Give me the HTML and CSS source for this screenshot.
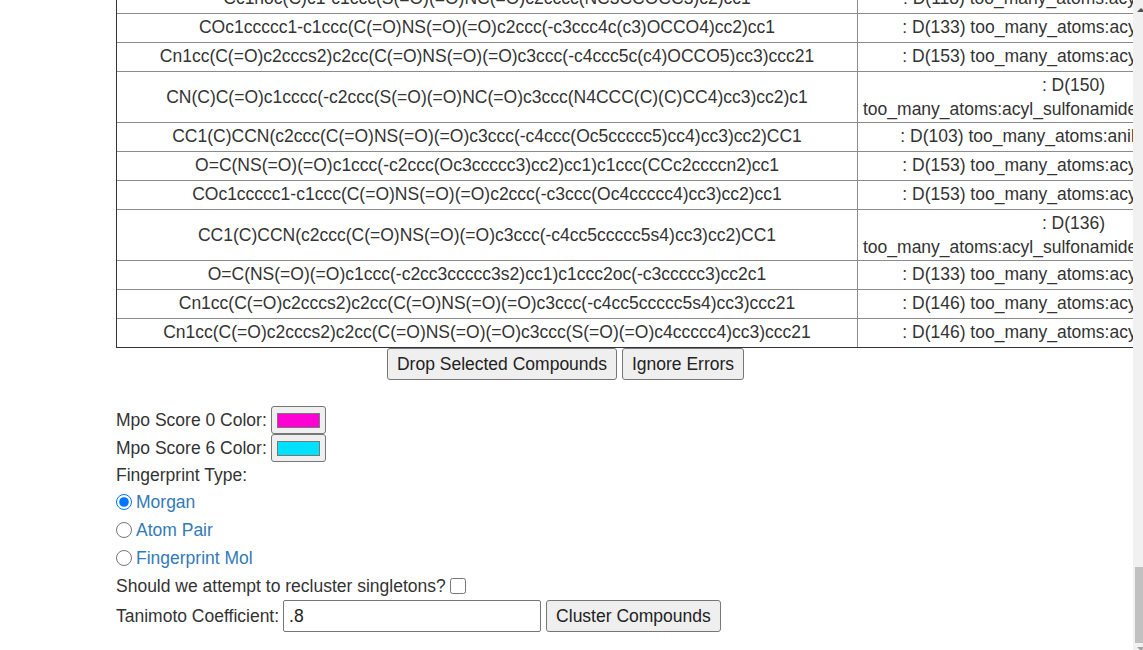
FILE: index.html
```html
<!DOCTYPE html>
<html>
<head>
<meta charset="utf-8">
<title>Compounds</title>
<link rel="stylesheet" href="styles.css">
</head>
<body>
<div class="viewport">
  <div class="page">
    <table class="errors">
      <colgroup><col class="c1"><col class="c2"></colgroup>
      <tr><td>Cc1noc(C)c1-c1ccc(S(=O)(=O)NC(=O)c2cccc(NC3CCOCC3)c2)cc1</td><td>: D(118) too_many_atoms:acyl_sulfonamide</td></tr>
      <tr><td>COc1ccccc1-c1ccc(C(=O)NS(=O)(=O)c2ccc(-c3ccc4c(c3)OCCO4)cc2)cc1</td><td>: D(133) too_many_atoms:acyl_sulfonamide</td></tr>
      <tr><td>Cn1cc(C(=O)c2cccs2)c2cc(C(=O)NS(=O)(=O)c3ccc(-c4ccc5c(c4)OCCO5)cc3)ccc21</td><td>: D(153) too_many_atoms:acyl_sulfonamide</td></tr>
      <tr class="two"><td>CN(C)C(=O)c1cccc(-c2ccc(S(=O)(=O)NC(=O)c3ccc(N4CCC(C)(C)CC4)cc3)cc2)c1</td><td>: D(150) too_many_atoms:acyl_sulfonamide_too_many_atoms:aniline</td></tr>
      <tr><td>CC1(C)CCN(c2ccc(C(=O)NS(=O)(=O)c3ccc(-c4ccc(Oc5ccccc5)cc4)cc3)cc2)CC1</td><td>: D(103) too_many_atoms:aniline_acylamide</td></tr>
      <tr><td>O=C(NS(=O)(=O)c1ccc(-c2ccc(Oc3ccccc3)cc2)cc1)c1ccc(CCc2ccccn2)cc1</td><td>: D(153) too_many_atoms:acyl_sulfonamide</td></tr>
      <tr><td>COc1ccccc1-c1ccc(C(=O)NS(=O)(=O)c2ccc(-c3ccc(Oc4ccccc4)cc3)cc2)cc1</td><td>: D(153) too_many_atoms:acyl_sulfonamide</td></tr>
      <tr class="two"><td>CC1(C)CCN(c2ccc(C(=O)NS(=O)(=O)c3ccc(-c4cc5ccccc5s4)cc3)cc2)CC1</td><td>: D(136) too_many_atoms:acyl_sulfonamide_too_many_atoms:thiophene</td></tr>
      <tr><td>O=C(NS(=O)(=O)c1ccc(-c2cc3ccccc3s2)cc1)c1ccc2oc(-c3ccccc3)cc2c1</td><td>: D(133) too_many_atoms:acyl_sulfonamide</td></tr>
      <tr><td>Cn1cc(C(=O)c2cccs2)c2cc(C(=O)NS(=O)(=O)c3ccc(-c4cc5ccccc5s4)cc3)ccc21</td><td>: D(146) too_many_atoms:acyl_sulfonamide</td></tr>
      <tr><td>Cn1cc(C(=O)c2cccs2)c2cc(C(=O)NS(=O)(=O)c3ccc(S(=O)(=O)c4ccccc4)cc3)ccc21</td><td>: D(146) too_many_atoms:acyl_sulfonamide</td></tr>
    </table>
    <div class="actions"><button class="btn">Drop Selected Compounds</button> <button class="btn">Ignore Errors</button></div>

    <div class="row mpo first"><span>Mpo Score 0 Color:</span><span class="colorbox"><span class="swatch magenta"></span></span></div>
    <div class="row mpo"><span>Mpo Score 6 Color:</span><span class="colorbox"><span class="swatch cyan"></span></span></div>
    <div class="row ftype">Fingerprint Type:</div>
    <label class="row opt"><input type="radio" name="fp" checked><span class="optlabel">Morgan</span></label>
    <label class="row opt"><input type="radio" name="fp"><span class="optlabel">Atom Pair</span></label>
    <label class="row opt"><input type="radio" name="fp"><span class="optlabel">Fingerprint Mol</span></label>
    <div class="row check"><span>Should we attempt to recluster singletons?</span><input type="checkbox" class="cb"></div>
    <div class="row tani"><span>Tanimoto Coefficient:</span><input type="text" class="txt" value=".8"><button class="btn cluster">Cluster Compounds</button></div>
  </div>
  <div class="scrollbar">
    <div class="arrow-up"></div>
    <div class="thumb"></div>
    <div class="arrow-down"></div>
  </div>
</div>
</body>
</html>
```

FILE: styles.css
```css
html, body {
  margin: 0;
  padding: 0;
  background: #fff;
}
body {
  font-family: "Liberation Sans", Arial, sans-serif;
  font-size: 17.5px;
  line-height: 25px;
  color: #333;
}
.viewport {
  position: relative;
  height: 650px;
  overflow: hidden;
  display: flex;
  flex-direction: column;
  justify-content: flex-end;
}
.page {
  flex-shrink: 0;
  width: 899px;
  padding: 0 0 18px 116px;
}
.errors {
  table-layout: fixed;
  width: 1174px;
  border-collapse: separate;
  border-spacing: 0;
  border: 1px solid #333;
}
.errors col.c1 { width: 740px; }
.errors col.c2 { width: 432px; }
.errors td {
  height: 27px;
  padding: 0 5px 1px;
  text-align: center;
  vertical-align: middle;
  border-top: 1px solid #8c8c8c;
  white-space: normal;
}
.errors tr.two td {
  line-height: 24px;
  padding: 1px 5px 1px;
}
.errors tr:first-child td { border-top: 0; }
.errors td + td { border-left: 1px solid #8c8c8c; }

.actions {
  height: 32px;
  text-align: center;
}
.btn {
  font-family: "Liberation Sans", Arial, sans-serif;
  font-size: 17.5px;
  color: #222;
  height: 32px;
  padding: 0 9px;
  margin: 0;
  border: 1px solid #767676;
  border-radius: 3px;
  background: #efefef;
  vertical-align: top;
}
.row {
  display: flex;
  align-items: center;
}
.mpo { height: 28px; gap: 4px; }
.mpo.first { margin-top: 26px; }
.colorbox {
  box-sizing: border-box;
  width: 55px;
  height: 28px;
  border: 1px solid #767676;
  border-radius: 3px;
  background: #efefef;
  display: flex;
  align-items: center;
  justify-content: center;
}
.swatch {
  box-sizing: border-box;
  width: 43px;
  height: 15px;
  border: 1px solid #777;
}
.magenta { background: #ff00d4; }
.cyan { background: #00e1ff; }
.ftype { height: 26px; }
.opt { height: 28px; }
.opt input {
  width: 16px;
  height: 16px;
  margin: 0 4px 0 0;
}
.optlabel { color: #337ab7; }
.check { height: 28px; gap: 4px; }
.cb {
  width: 16px;
  height: 16px;
  margin: 0;
}
.tani { height: 32px; gap: 4px; }
.txt {
  box-sizing: border-box;
  width: 258px;
  height: 32px;
  margin: 0;
  padding: 0 5px;
  border: 1px solid #767676;
  border-radius: 2px;
  font-family: "Liberation Sans", Arial, sans-serif;
  font-size: 17.5px;
  color: #222;
}
.cluster { margin-left: 1px; }
.scrollbar {
  position: absolute;
  top: 0;
  right: 0;
  width: 10px;
  height: 650px;
  background: #f1f1f1;
}
.thumb {
  position: absolute;
  top: 567px;
  left: 2px;
  right: 0;
  height: 76px;
  background: #c1c1c1;
}
.arrow-up {
  position: absolute;
  top: 8px;
  left: 4px;
  width: 0;
  height: 0;
  border-left: 4px solid transparent;
  border-right: 4px solid transparent;
  border-bottom: 4px solid #505050;
}
.arrow-down {
  position: absolute;
  top: 647px;
  left: 4px;
  width: 0;
  height: 0;
  border-left: 4px solid transparent;
  border-right: 4px solid transparent;
  border-top: 4px solid #a3a3a3;
}
```
